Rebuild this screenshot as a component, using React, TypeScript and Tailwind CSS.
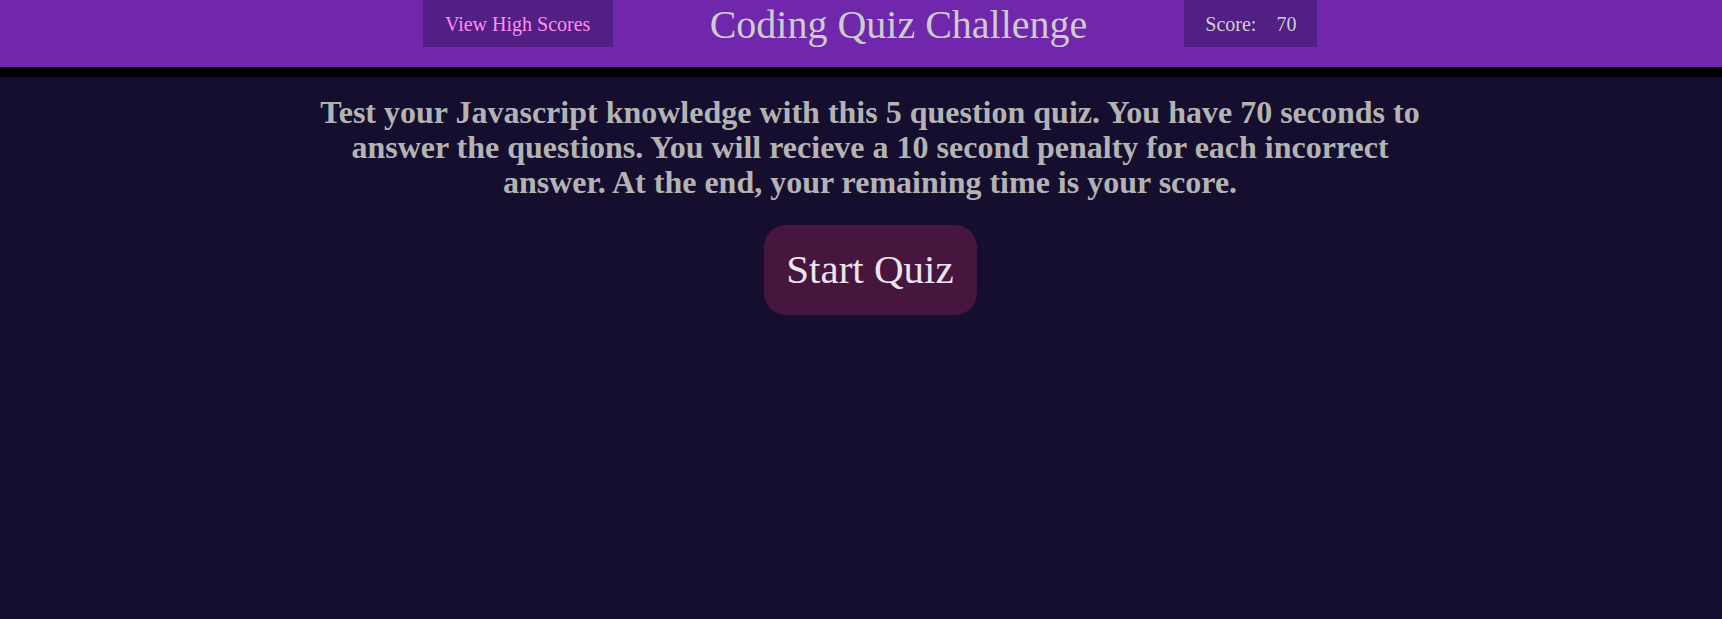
export default function App() {
  return (
    <div className="min-h-[619px] bg-[#160e2f] font-['Liberation_Serif',serif]">
      <header className="flex h-[77px] items-start justify-center gap-[97px] border-b-[10px] border-black bg-[#7027ab] pl-[18px]">
        <button className="flex h-[47px] w-[190px] items-center justify-center bg-[#521f84] text-[20px] text-[#ff8ef0]">
          View High Scores
        </button>
        <h1 className="pt-[3px] text-[40px] leading-[44px] text-[#cccccc]">Coding Quiz Challenge</h1>
        <div className="flex h-[47px] w-[133px] items-center justify-center gap-[20px] bg-[#521f84] text-[20px] text-[#d0d0d0]">
          <span>Score:</span>
          <span>70</span>
        </div>
      </header>
      <main className="flex flex-col items-center pl-[18px] pt-[18px]">
        <p className="max-w-[1120px] text-center text-[32px] font-bold leading-[35px] text-[#b3b3b3]">
          Test your Javascript knowledge with this 5 question quiz. You have 70 seconds to answer the
          questions. You will recieve a 10 second penalty for each incorrect answer. At the end, your
          remaining time is your score.
        </p>
        <button className="mt-[25px] flex h-[90px] w-[213px] items-center justify-center rounded-[22px] bg-[#47163f] text-[41px] text-[#ece4ec]">
          Start Quiz
        </button>
      </main>
    </div>
  );
}
